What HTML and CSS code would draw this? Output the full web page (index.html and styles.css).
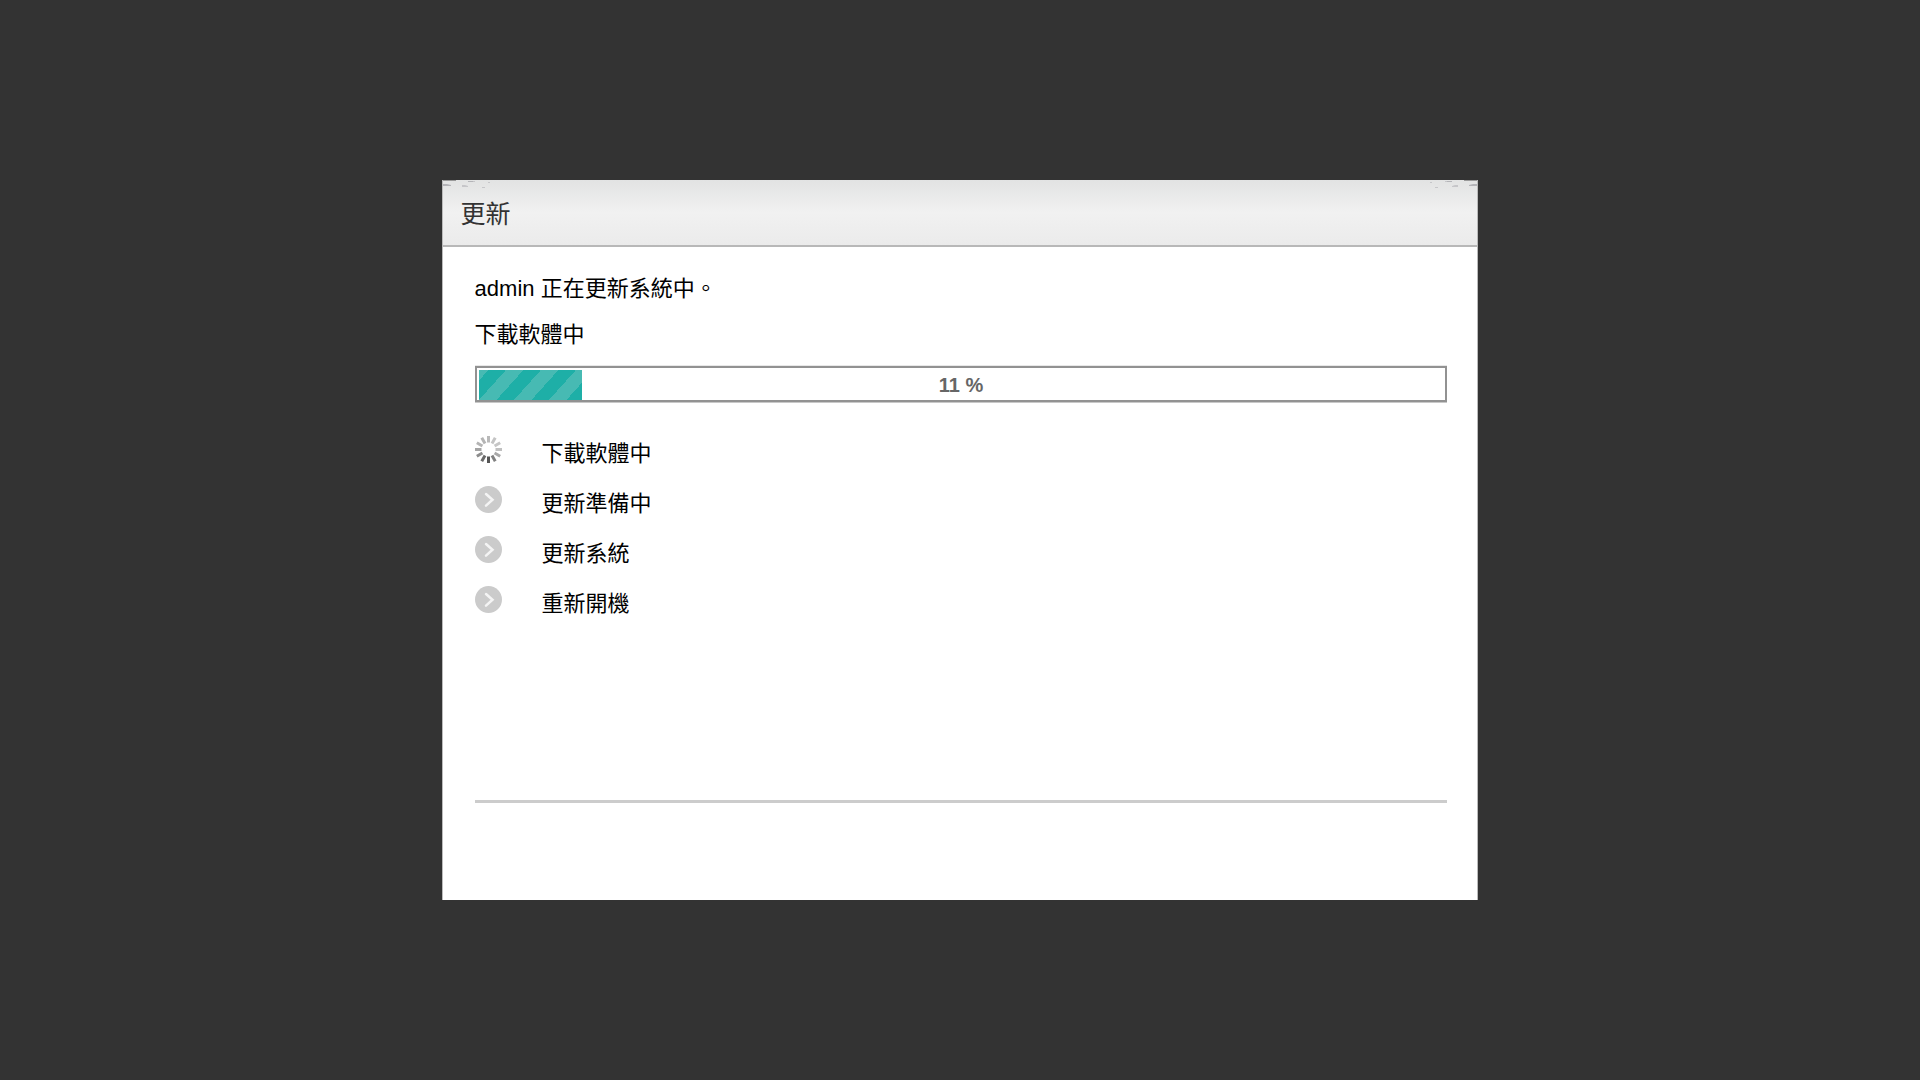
FILE: index.html
```html
<!DOCTYPE html>
<html lang="zh-Hant">
<head>
  <meta charset="UTF-8">
  <title>更新</title>
  <link rel="stylesheet" href="styles.css">
</head>
<body>
<!-- shared symbols -->
<svg class="symbols" aria-hidden="true">
  <symbol id="wait" viewBox="0 0 27 27">
    <circle cx="13.5" cy="13.5" r="13.5" fill="#cbcbcb"/>
    <path d="M11 8l6.5 5.8L11 19.6" fill="none" stroke="#f4f4f4" stroke-width="2.5" stroke-linecap="round"/>
  </symbol>
  <symbol id="loading" viewBox="0 0 27 27">
    <g stroke-width="3">
      <path stroke="#b9b9b9" d="M13.5 0v6.5"/>
      <path stroke="#c4c4c4" d="M13.5 0v6.5" transform="rotate(30 13.5 13.5)"/>
      <path stroke="#c6c6c6" d="M13.5 0v6.5" transform="rotate(60 13.5 13.5)"/>
      <path stroke="#c0c0c0" d="M13.5 0v6.5" transform="rotate(90 13.5 13.5)"/>
      <path stroke="#a8a8a8" d="M13.5 0v6.5" transform="rotate(120 13.5 13.5)"/>
      <path stroke="#808080" d="M13.5 0v6.5" transform="rotate(150 13.5 13.5)"/>
      <path stroke="#555555" d="M13.5 0v6.5" transform="rotate(180 13.5 13.5)"/>
      <path stroke="#6a6a6a" d="M13.5 0v6.5" transform="rotate(210 13.5 13.5)"/>
      <path stroke="#8c8c8c" d="M13.5 0v6.5" transform="rotate(240 13.5 13.5)"/>
      <path stroke="#a4a4a4" d="M13.5 0v6.5" transform="rotate(270 13.5 13.5)"/>
      <path stroke="#b4b4b4" d="M13.5 0v6.5" transform="rotate(300 13.5 13.5)"/>
      <path stroke="#b4b4b4" d="M13.5 0v6.5" transform="rotate(330 13.5 13.5)"/>
    </g>
  </symbol>
  <symbol id="corner" viewBox="0 0 48 9">
    <path fill="#999999" d="M0 0h13v1H0z"/>
    <path fill="#b4b4b8" d="M0 4h4l4 1v1H0zM25 1h5v1h-5z"/>
    <path fill="#c6c6c9" d="M19 5h3l3 1v1h-6zM30 1h2v1h-2zM39 7h3v1h-3zM45 2h2v1h-2z"/>
  </symbol>
</svg>

<main class="dialog">
  <div class="dialog-header">
    <svg class="corner"><use href="#corner"/></svg>
    <h1 class="dialog-title">更新</h1>
    <svg class="corner corner-right"><use href="#corner"/></svg>
  </div>
  <div class="dialog-body">
    <p class="message">admin 正在更新系統中。</p>
    <p class="message" id="status">下載軟體中</p>

    <div class="progress" role="progressbar" aria-labelledby="status" aria-valuemin="0" aria-valuemax="100" aria-valuenow="11">
      <div class="progress-fill" style="width: 10.7%"></div>
      <span class="progress-text">11 %</span>
    </div>

    <ul class="steps">
      <li><svg class="icon"><use href="#loading"/></svg><span>下載軟體中</span></li>
      <li><svg class="icon"><use href="#wait"/></svg><span>更新準備中</span></li>
      <li><svg class="icon"><use href="#wait"/></svg><span>更新系統</span></li>
      <li><svg class="icon"><use href="#wait"/></svg><span>重新開機</span></li>
    </ul>
  </div>
  <div class="dialog-footer"></div>
</main>
</body>
</html>
```
FILE: styles.css
```css
* {
  box-sizing: border-box;
}

body {
  margin: 0;
  min-height: 100vh;
  display: flex;
  align-items: center;
  justify-content: center;
  background-color: #333333;
  color: #000000;
  font-family: "Liberation Sans", "Noto Sans CJK TC", sans-serif;
  font-size: 22px;
  line-height: 30px;
}

.symbols {
  display: none;
}

.dialog {
  display: flex;
  flex-direction: column;
  width: 54%;
  min-height: 720px;
  background-color: #ffffff;
  border: 1px solid #bbbbbb;
  border-top: 0;
  border-bottom: 0;
}

.dialog-header {
  position: relative;
  padding: 19px 18px 16px;
  background: linear-gradient(#e2e3e3, #f1f1f1 50%, #ebebeb);
  border-bottom: 2px solid #b8b8b8;
}

.dialog-title {
  margin: 0;
  font-size: 25px;
  font-weight: normal;
  color: #333333;
}

/* worn edge over both top corners */
.corner {
  position: absolute;
  top: 0;
  left: 0;
  width: 48px;
  height: 9px;
}

.corner-right {
  left: auto;
  right: 0;
  transform: scaleX(-1);
}

.dialog-body {
  flex: 1;
  margin: 0 30px 0 32px;
  padding-top: 27px;
  border-bottom: 3px solid #cccccc;
}

.message {
  margin: 0 0 16px;
}

.progress {
  position: relative;
  height: 36px;
  padding: 2px 2px 0;
  border: 2px solid #929292;
  box-shadow: 0 -1px 0 #e8e8e8, 0 1px 0 #c8c8c8;
}

.progress-fill {
  height: 30px;
  background: repeating-linear-gradient(132deg, #47bab3 0, #47bab3 7px, #1eafa7 7px, #1eafa7 20px, #47bab3 20px, #47bab3 26px);
}

/* sits over the fill */
.progress-text {
  position: absolute;
  top: 0;
  left: 0;
  width: 100%;
  line-height: 34px;
  font-size: 20px;
  font-weight: bold;
  color: #666666;
  text-align: center;
}

.steps {
  display: grid;
  gap: 17px;
  margin: 34px 0 0;
  padding: 0;
  list-style: none;
}

.steps li {
  display: flex;
  gap: 40px;
}

.steps span {
  padding-top: 3px;
}

.icon {
  width: 27px;
  height: 27px;
}

.dialog-footer {
  height: 97px;
}
```
